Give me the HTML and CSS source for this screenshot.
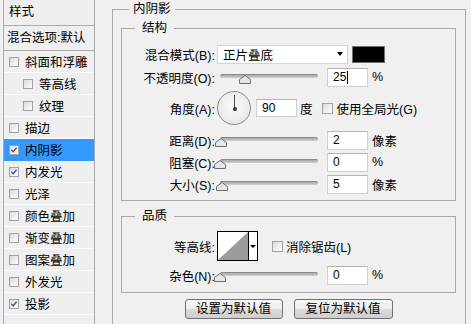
FILE: index.html
```html
<!DOCTYPE html>
<html lang="zh-CN">
<head>
<meta charset="utf-8">
<title>图层样式 - 内阴影</title>
<link rel="stylesheet" href="styles.css">
</head>
<body>
<div class="dlg">
  <div class="list">
    <div class="list-head">样式</div>
    <div class="list-blend">混合选项:默认</div>
    <div class="item"><span class="cb"></span>斜面和浮雕</div>
    <div class="item sub"><span class="cb"></span>等高线</div>
    <div class="item sub"><span class="cb"></span>纹理</div>
    <div class="item"><span class="cb"></span>描边</div>
    <div class="item sel"><span class="cb"><svg viewBox="0 0 10 10" class="tick"><polyline points="1.8,4.8 4,7.2 8.2,2.2"/></svg></span>内阴影</div>
    <div class="item"><span class="cb"><svg viewBox="0 0 10 10" class="tick"><polyline points="1.8,4.8 4,7.2 8.2,2.2"/></svg></span>内发光</div>
    <div class="item"><span class="cb"></span>光泽</div>
    <div class="item"><span class="cb"></span>颜色叠加</div>
    <div class="item"><span class="cb"></span>渐变叠加</div>
    <div class="item"><span class="cb"></span>图案叠加</div>
    <div class="item"><span class="cb"></span>外发光</div>
    <div class="item"><span class="cb"><svg viewBox="0 0 10 10" class="tick"><polyline points="1.8,4.8 4,7.2 8.2,2.2"/></svg></span>投影</div>
  </div>

  <div class="panel">
    <div class="legend legend-outer">内阴影</div>

    <div class="group g1">
      <div class="legend legend-inner">结构</div>

      <div class="row r1">
        <div class="lbl">混合模式(B):</div>
        <div class="select"><span class="sel-text">正片叠底</span><span class="arrow"></span></div>
        <div class="swatch"></div>
      </div>

      <div class="row r2">
        <div class="lbl">不透明度(O):</div>
        <div class="slider"><div class="track"></div><svg class="thumb" style="left:21.5px" viewBox="0 0 12 9"><path d="M6 0.5 L11.5 4.5 L11.5 8.5 L0.5 8.5 L0.5 4.5 Z"/></svg></div>
        <div class="input">25<span class="caret"></span></div>
        <div class="unit">%</div>
      </div>

      <div class="row r3">
        <div class="lbl">角度(A):</div>
        <div class="dial"><span class="hand"></span><span class="dot"></span></div>
        <div class="input input-angle">90</div>
        <div class="unit unit-deg">度</div>
        <span class="cb cb-r"></span>
        <div class="cb-text">使用全局光(G)</div>
      </div>

      <div class="row r4">
        <div class="lbl">距离(D):</div>
        <div class="slider"><div class="track"></div><svg class="thumb" style="left:-2.2px" viewBox="0 0 12 9"><path d="M6 0.5 L11.5 4.5 L11.5 8.5 L0.5 8.5 L0.5 4.5 Z"/></svg></div>
        <div class="input">2</div>
        <div class="unit">像素</div>
      </div>

      <div class="row">
        <div class="lbl">阻塞(C):</div>
        <div class="slider"><div class="track"></div><svg class="thumb" style="left:-3px" viewBox="0 0 12 9"><path d="M6 0.5 L11.5 4.5 L11.5 8.5 L0.5 8.5 L0.5 4.5 Z"/></svg></div>
        <div class="input">0</div>
        <div class="unit">%</div>
      </div>

      <div class="row">
        <div class="lbl">大小(S):</div>
        <div class="slider"><div class="track"></div><svg class="thumb" style="left:-1px" viewBox="0 0 12 9"><path d="M6 0.5 L11.5 4.5 L11.5 8.5 L0.5 8.5 L0.5 4.5 Z"/></svg></div>
        <div class="input">5</div>
        <div class="unit">像素</div>
      </div>
    </div>

    <div class="group g2">
      <div class="legend legend-inner">品质</div>

      <div class="row q1">
        <div class="lbl">等高线:</div>
        <div class="contour">
          <svg class="curve" viewBox="0 0 30 28" preserveAspectRatio="none"><polygon points="0,28 30,0 30,28"/></svg>
          <span class="c-drop"><span class="arrow arrow-s"></span></span>
        </div>
        <span class="cb cb-r cb-aa"></span>
        <div class="cb-text">消除锯齿(L)</div>
      </div>

      <div class="row q2">
        <div class="lbl">杂色(N):</div>
        <div class="slider"><div class="track"></div><svg class="thumb" style="left:-3px" viewBox="0 0 12 9"><path d="M6 0.5 L11.5 4.5 L11.5 8.5 L0.5 8.5 L0.5 4.5 Z"/></svg></div>
        <div class="input">0</div>
        <div class="unit">%</div>
      </div>
    </div>

    <div class="buttons">
      <div class="btn btn1">设置为默认值</div>
      <div class="btn btn2">复位为默认值</div>
    </div>
  </div>
</div>
</body>
</html>
```

FILE: styles.css
```css
html, body {
  margin: 0;
  padding: 0;
}
body {
  width: 471px;
  height: 324px;
  overflow: hidden;
  background: #f0f0f0;
  font-family: "Liberation Sans", "Noto Sans CJK SC", sans-serif;
  font-size: 12.5px;
  color: #000;
}
.dlg {
  display: flex;
  align-items: flex-start;
  height: 324px;
}

/* left list */
.list {
  margin-left: 3px;
  width: 92px;
  height: 324px;
  box-sizing: border-box;
  border-left: 1px solid #a9a9a9;
  border-right: 1px solid #a9a9a9;
  background: #efefef;
  flex: none;
}
.list-head {
  height: 25px;
  line-height: 25px;
  padding-left: 5px;
  border-bottom: 1px solid #a9a9a9;
}
.list-blend {
  height: 24px;
  line-height: 24px;
  padding-left: 3px;
  border-bottom: 1px solid #a9a9a9;
  white-space: nowrap;
}
.item {
  height: 21px;
  border-bottom: 1px solid #fbfbfb;
  display: flex;
  align-items: center;
  padding-left: 5px;
  white-space: nowrap;
}
.item.sub {
  padding-left: 19px;
}
.item.sel {
  background: #3399ff;
  border-bottom-color: #3399ff;
}
.cb {
  width: 10px;
  height: 10px;
  box-sizing: border-box;
  border: 1px solid #a2a2a2;
  background: linear-gradient(135deg, #d9d9d9 0%, #f1f1f1 60%, #fdfdfd 100%);
  margin-right: 6px;
  flex: none;
  display: block;
  position: relative;
}
.tick {
  position: absolute;
  left: 0;
  top: 0;
  width: 8px;
  height: 8px;
}
.tick polyline {
  fill: none;
  stroke: #46468e;
  stroke-width: 1.6;
}

/* right panel */
.panel {
  margin-left: 17px;
  margin-top: 9px;
  width: 354px;
  height: 315px;
  box-sizing: border-box;
  border: 1px solid #a9a9a9;
  border-bottom: 0;
  padding: 18px 9px 0 8px;
  position: relative;
  flex: none;
}
.legend {
  position: absolute;
  top: -9px;
  height: 16px;
  line-height: 16px;
  background: #f0f0f0;
  white-space: nowrap;
}
.legend-outer {
  left: 16px;
  padding: 0 4px;
}
.legend-inner {
  left: 13px;
  padding: 0 7px;
}
.group {
  border: 1px solid #a9a9a9;
  box-sizing: border-box;
  position: relative;
}
.g1 {
  height: 173px;
  padding-top: 14px;
}
.g2 {
  margin-top: 15px;
  height: 77px;
  padding-top: 14px;
}
.row {
  display: flex;
  align-items: center;
  height: 22px;
  white-space: nowrap;
}
.r2 { margin-top: 1px; }
.r3 { margin-top: 3px; height: 34px; }
.r4 { margin-top: 4px; }
.q1 { height: 30px; }
.q2 { margin-top: 3px; }
.lbl {
  width: 93px;
  text-align: right;
  margin-right: 2px;
  flex: none;
}

.select {
  width: 131px;
  height: 19px;
  box-sizing: border-box;
  background: #fff;
  border: 1px solid #d4d4d4;
  display: flex;
  align-items: center;
  justify-content: space-between;
  padding: 0 4px 0 5px;
}
.arrow {
  width: 0;
  height: 0;
  border-left: 3.5px solid transparent;
  border-right: 3.5px solid transparent;
  border-top: 4px solid #000;
}
.swatch {
  width: 33px;
  height: 17px;
  box-sizing: border-box;
  background: #000;
  border: 1px solid #6e6e6e;
  margin-left: 4px;
}

.slider {
  width: 104px;
  height: 22px;
  position: relative;
  margin-right: 6px;
  flex: none;
}
.track {
  position: absolute;
  left: 3px;
  top: 8px;
  width: 98px;
  height: 4px;
  box-sizing: border-box;
  border-radius: 2px;
  border-top: 1px solid #8a8a8a;
  background: linear-gradient(#a9a9a9, #cfcfcf);
}
.thumb {
  position: absolute;
  top: 9px;
  width: 12px;
  height: 9px;
}
.thumb path {
  fill: #e6e6e6;
  stroke: #6f6f6f;
  stroke-width: 1;
}

.input {
  width: 41px;
  height: 19px;
  box-sizing: border-box;
  background: #fff;
  border: 1px solid #d0d0d0;
  border-top-color: #b4b4b4;
  padding-left: 5px;
  line-height: 17px;
  font-size: 12px;
  display: flex;
  align-items: center;
  flex: none;
}
.caret {
  display: inline-block;
  width: 1px;
  height: 13px;
  background: #000;
  margin-left: 0.5px;
}
.unit {
  margin-left: 4px;
}

.dial {
  width: 34px;
  height: 34px;
  box-sizing: border-box;
  border-radius: 50%;
  border: 1px solid #8c8c8c;
  background: radial-gradient(circle at 50% 45%, #fbfbfb 0%, #ececec 60%, #dedede 100%);
  position: relative;
  flex: none;
}
.hand {
  position: absolute;
  left: 15.5px;
  top: 3px;
  width: 1.5px;
  height: 13px;
  background: #4a4a4a;
}
.dot {
  position: absolute;
  left: 14.5px;
  top: 14.5px;
  width: 4px;
  height: 4px;
  border-radius: 50%;
  background: #333;
}
.input-angle {
  margin-left: 5px;
  height: 18px;
}
.unit-deg {
  margin-left: 3px;
}
.cb-r {
  width: 11px;
  height: 11px;
  margin-left: 9px;
  margin-right: 4px;
}
.cb-aa {
  margin-left: 14px;
  margin-right: 3px;
}

.contour {
  width: 41px;
  height: 30px;
  box-sizing: border-box;
  border: 1px solid #000;
  background: #fff;
  display: flex;
  flex: none;
}
.curve {
  width: 30px;
  height: 28px;
  display: block;
  border-right: 1px solid #000;
}
.curve polygon {
  fill: #9c9c9c;
}
.c-drop {
  flex: 1;
  display: flex;
  align-items: center;
  justify-content: center;
}
.arrow-s {
  border-left-width: 3px;
  border-right-width: 3px;
  border-top-width: 3.5px;
}

.buttons {
  margin-top: 6px;
  display: flex;
  justify-content: center;
  gap: 11px;
}
.btn {
  height: 20px;
  box-sizing: border-box;
  border: 1px solid #707070;
  border-radius: 3px;
  background: linear-gradient(#f7f7f7 0%, #ececec 48%, #dadada 52%, #cfcfcf 100%);
  text-align: center;
  line-height: 18px;
  white-space: nowrap;
}
.btn1 { width: 98px; }
.btn2 { width: 99px; }
```
